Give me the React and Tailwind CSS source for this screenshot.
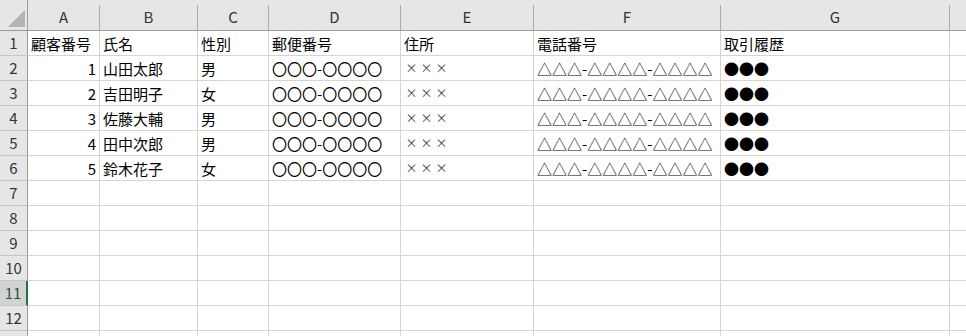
import React from 'react';

const COLS = ['A', 'B', 'C', 'D', 'E', 'F', 'G', ''];

const rows = [
  ['顧客番号', '氏名', '性別', '郵便番号', '住所', '電話番号', '取引履歴'],
  [1, '山田太郎', '男', '〇〇〇-〇〇〇〇', '×××', '△△△-△△△△-△△△△', '●●●'],
  [2, '吉田明子', '女', '〇〇〇-〇〇〇〇', '×××', '△△△-△△△△-△△△△', '●●●'],
  [3, '佐藤大輔', '男', '〇〇〇-〇〇〇〇', '×××', '△△△-△△△△-△△△△', '●●●'],
  [4, '田中次郎', '男', '〇〇〇-〇〇〇〇', '×××', '△△△-△△△△-△△△△', '●●●'],
  [5, '鈴木花子', '女', '〇〇〇-〇〇〇〇', '×××', '△△△-△△△△-△△△△', '●●●'],
];

const grid = 'grid grid-cols-[28px_72px_98px_71px_132px_133px_187px_229px_1fr]';

function Crosses({ text }) {
  return (
    <span className="flex">
      {text.split('').map((ch, i) => (
        <span key={i} className="w-[15px] text-center text-[12px] text-[#444]">
          {ch}
        </span>
      ))}
    </span>
  );
}

export default function App() {
  const bodyRows = Array.from({ length: 13 }, (_, i) => rows[i] || []);

  return (
    <div
      className="w-[966px] h-[336px] overflow-hidden bg-white text-black"
      style={{ fontFamily: '"Noto Sans CJK JP", "Noto Sans", sans-serif' }}
    >
      {/* column headers */}
      <div className={`${grid} h-[31px] bg-[#e6e6e6] border-b border-[#9b9b9b]`}>
        <div className="relative border-r border-[#9b9b9b]">
          <svg className="absolute left-[8px] top-[10px]" width="17" height="17" viewBox="0 0 17 17">
            <polygon points="17,0 17,17 0,17" fill="#b4b4b4" />
          </svg>
        </div>
        {COLS.map((c, i) => (
          <div key={i} className="pt-[5px]">
            <div
              className={`h-[25px] flex items-center justify-center text-[15px] text-[#333] ${
                i < 7 ? 'border-r border-[#ababab]' : ''
              }`}
            >
              {c}
            </div>
          </div>
        ))}
      </div>

      {/* body */}
      {bodyRows.map((r, ri) => {
        const selected = ri === 10;
        return (
          <div key={ri} className={`${grid} h-[25px]`}>
            <div
              className={`flex items-center justify-center text-[15px] border-b ${
                selected
                  ? 'bg-[#d2d2d2] text-[#1f5c38] border-r-2 border-r-[#217346] border-b-[#c6c6c6]'
                  : 'bg-[#e6e6e6] text-[#333] border-r border-r-[#9b9b9b] border-b-[#c6c6c6]'
              }`}
            >
              {ri < 12 ? ri + 1 : ''}
            </div>
            {Array.from({ length: 8 }, (_, ci) => {
              const v = r[ci];
              const isNum = typeof v === 'number';
              return (
                <div
                  key={ci}
                  className={`flex items-center text-[15px] leading-none whitespace-nowrap overflow-hidden border-b border-[#d4d4d4] ${
                    ci < 7 ? 'border-r' : ''
                  } ${isNum ? 'justify-end pr-[3px]' : 'pl-[3px]'}`}
                >
                  {ci === 4 && ri > 0 && v ? <Crosses text={v} /> : v}
                </div>
              );
            })}
          </div>
        );
      })}
    </div>
  );
}
